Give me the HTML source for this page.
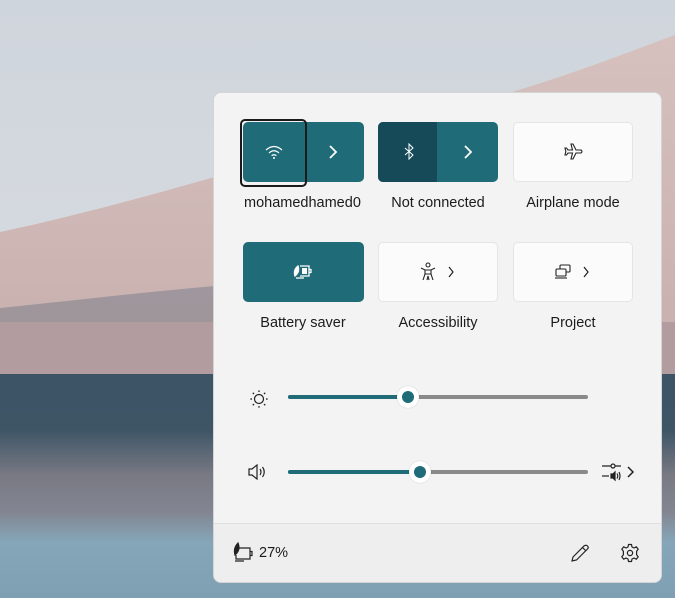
<!DOCTYPE html>
<html><head><style>
body{margin:0;width:675px;height:598px;overflow:hidden;position:relative;font-family:"Liberation Sans",sans-serif;}
.bg{position:absolute;left:0;top:0}
.panel{position:absolute;left:213px;top:92px;width:447px;height:489px;background:#f3f3f3;border:1px solid #d4d4d4;border-radius:8px;overflow:hidden}
.tile{position:absolute;height:60px;border-radius:5px;box-sizing:border-box}
.teal{background:#1f6b78}
.white{background:#fbfbfb;border:1px solid #e5e5e5}
.lbl{position:absolute;font-size:14.5px;color:#1b1b1b;text-align:center;width:130px}
.foot{position:absolute;left:0;top:430px;width:447px;height:60px;background:#eeeeee;border-top:1px solid #dedede}
svg{position:absolute}
</style></head><body>
<svg class="bg" width="675" height="598">
<defs>
<linearGradient id="sky" x1="0" y1="0" x2="0" y2="1"><stop offset="0" stop-color="#cfd5dc"/><stop offset="1" stop-color="#dde0e4"/></linearGradient>
<linearGradient id="dune" x1="0" y1="0" x2="0" y2="1"><stop offset="0" stop-color="#d6c1bf"/><stop offset="1" stop-color="#c6adab"/></linearGradient>
<linearGradient id="water" x1="0" y1="0" x2="0" y2="1"><stop offset="0" stop-color="#3c5466"/><stop offset="0.25" stop-color="#3e5566"/><stop offset="0.45" stop-color="#787983"/><stop offset="0.62" stop-color="#838692"/><stop offset="0.75" stop-color="#84a6b8"/><stop offset="1" stop-color="#7ea0b2"/></linearGradient>
</defs>
<rect width="675" height="598" fill="url(#sky)"/>
<path d="M0 232 C150 200 300 150 450 110 C560 80 620 55 675 35 L675 400 L0 400Z" fill="url(#dune)"/>
<path d="M0 308 C80 300 160 290 230 285 L230 330 L0 330Z" fill="#7c7f8c" opacity="0.55"/>
<path d="M0 322 L675 322 L675 380 L0 380Z" fill="#b29c9f"/>
<rect y="374" width="675" height="224" fill="url(#water)"/>
</svg>
<div class="panel">
 <div class="tile teal" style="left:29px;top:29px;width:121px"></div>
 <div style="position:absolute;left:92px;top:29px;width:1px;height:60px;background:#1a5e6a"></div>
 <div style="position:absolute;left:26px;top:26px;width:63px;height:64px;border:2px solid #1a1a1a;border-radius:5px"></div>
 <svg style="left:50px;top:51px" width="20" height="16" viewBox="0 0 20 16" fill="none" stroke="#fff" stroke-width="1.2"><path d="M2 6 Q10 -1 18 6"/><path d="M5 9 Q10 4.5 15 9"/><path d="M7.6 11.6 Q10 9.8 12.4 11.6"/><circle cx="10" cy="14" r="1" fill="#fff" stroke="none"/></svg>
 <svg style="left:114px;top:52px" width="10" height="14" fill="none" stroke="#fff" stroke-width="1.8"><path d="M2 1 L8 7 L2 13"/></svg>
 <div class="tile" style="left:164px;top:29px;width:120px;background:#1f6b78"></div>
 <div style="position:absolute;left:164px;top:29px;width:59px;height:60px;background:#164a58;border-radius:5px 0 0 5px"></div>
 <svg style="left:189px;top:50px" width="12" height="18" fill="none" stroke="#fff" stroke-width="1"><path d="M2 5 L10 12 L6 16 L6 1 L10 5 L2 12"/></svg>
 <svg style="left:249px;top:52px" width="10" height="14" fill="none" stroke="#fff" stroke-width="1.8"><path d="M2 1 L8 7 L2 13"/></svg>
 <div class="tile white" style="left:299px;top:29px;width:120px"></div>
 <svg style="left:349px;top:49px" width="22" height="20" viewBox="0 0 22 20" fill="none" stroke="#222" stroke-width="1.1"><path d="M8 2 L10 2 L13 8 L18 8 Q20 9.5 18 11 L13 11 L10 17 L8 17 L9.5 11 L5 11 L3.5 13 L2 13 L2.8 9.5 L2 6 L3.5 6 L5 8 L9.5 8 Z"/></svg>
 <div class="lbl" style="left:30px;top:102px;width:120px;overflow:hidden;white-space:nowrap;text-align:left">mohamedhamed0</div>
 <div class="lbl" style="left:159px;top:102px">Not connected</div>
 <div class="lbl" style="left:294px;top:102px">Airplane mode</div>
 <div class="tile teal" style="left:29px;top:149px;width:121px"></div>
 <svg style="left:78px;top:170px" width="22" height="16" viewBox="0 0 22 16" fill="none" stroke="#fff" stroke-width="1.3"><path d="M8 3 L17 3 L17 13 L8 13"/><rect x="10" y="5" width="5" height="6" fill="#fff" stroke="none"/><path d="M17 6.5 L19 6.5 L19 9.5 L17 9.5"/><path d="M6 3 Q1 7 3 13 Q8 9 6 3Z" fill="#fff"/><path d="M4 15 L12 15"/></svg>
 <div class="tile white" style="left:164px;top:149px;width:120px"></div>
 <svg style="left:205px;top:169px" width="18" height="20" viewBox="0 0 18 20" fill="none" stroke="#222" stroke-width="1.1"><circle cx="9" cy="3" r="2"/><path d="M2 6 L6 8 L12 8 L16 6 M6 8 L6 12 L4 18 M12 8 L12 12 L14 18 M6 12 L12 12 M8 18 L9 14 L10 18"/></svg>
 <svg style="left:233px;top:173px" width="8" height="12" fill="none" stroke="#222" stroke-width="1.2"><path d="M2 1 L6 6 L2 11"/></svg>
 <div class="tile white" style="left:299px;top:149px;width:120px"></div>
 <svg style="left:339px;top:170px" width="22" height="18" viewBox="0 0 22 18" fill="none" stroke="#222" stroke-width="1.1"><rect x="7" y="2" width="10" height="7" rx="1"/><rect x="3" y="6" width="10" height="7" rx="1" fill="#fbfbfb"/><path d="M2 15 L14 15"/></svg>
 <svg style="left:368px;top:173px" width="8" height="12" fill="none" stroke="#222" stroke-width="1.2"><path d="M2 1 L6 6 L2 11"/></svg>
 <div class="lbl" style="left:24px;top:222px">Battery saver</div>
 <div class="lbl" style="left:159px;top:222px">Accessibility</div>
 <div class="lbl" style="left:294px;top:222px">Project</div>
 <svg style="left:35px;top:296px" width="20" height="20" viewBox="0 0 20 20" fill="none" stroke="#222" stroke-width="1.2"><circle cx="10" cy="10" r="4.5"/><g stroke-width="1.5" stroke-linecap="round"><path d="M10 2v.3M10 17.7v.3M2 10h.3M17.7 10h.3M4.3 4.3l.2.2M15.5 15.5l.2.2M4.3 15.7l.2-.2M15.5 4.5l.2-.2"/></g></svg>
 <div style="position:absolute;left:74px;top:302px;width:300px;height:4px;border-radius:2px;background:#8a8a8a"></div>
 <div style="position:absolute;left:74px;top:302px;width:120px;height:4px;border-radius:2px;background:#1f6b78"></div>
 <div style="position:absolute;left:183px;top:293px;width:22px;height:22px;border-radius:50%;background:#fff;box-shadow:0 0 1px rgba(0,0,0,.3)"></div>
 <div style="position:absolute;left:188px;top:298px;width:12px;height:12px;border-radius:50%;background:#1f6b78"></div>
 <svg style="left:33px;top:370px" width="22" height="18" viewBox="0 0 22 18" fill="none" stroke="#222" stroke-width="1.2"><path d="M2 6 L5 6 L10 2 L10 16 L5 12 L2 12Z"/><path d="M13 6 Q15 9 13 12M15.5 4 Q19 9 15.5 14"/></svg>
 <div style="position:absolute;left:74px;top:377px;width:300px;height:4px;border-radius:2px;background:#8a8a8a"></div>
 <div style="position:absolute;left:74px;top:377px;width:132px;height:4px;border-radius:2px;background:#1f6b78"></div>
 <div style="position:absolute;left:195px;top:368px;width:22px;height:22px;border-radius:50%;background:#fff;box-shadow:0 0 1px rgba(0,0,0,.3)"></div>
 <div style="position:absolute;left:200px;top:373px;width:12px;height:12px;border-radius:50%;background:#1f6b78"></div>
 <svg style="left:387px;top:368px" width="36" height="22" viewBox="0 0 36 22" fill="none" stroke="#222" stroke-width="1.2"><path d="M1 5 L10 5 M14 5 L20 5"/><circle cx="12" cy="5" r="2"/><path d="M1 15 L8 15"/><path d="M10 13 L12 13 L14 11 L14 19 L12 17 L10 17Z" fill="#222"/><path d="M16 12.5 Q17.5 15 16 17.5M18 11 Q20 15 18 19"/><path d="M27 6 L32 11 L27 16" stroke-width="1.5"/></svg>
 <div class="foot">
  <svg style="left:18px;top:18px" width="24" height="20" viewBox="0 0 24 20" fill="none" stroke="#222" stroke-width="1.2"><path d="M7 6 L18 6 L18 17 L4 17 L4 13"/><path d="M18 9.5 L20 9.5 L20 13.5 L18 13.5"/><path d="M6 1 Q1 6 3 13 Q9 8 6 1Z" fill="#222"/><path d="M3 19 L12 19"/></svg>
  <div style="position:absolute;left:45px;top:21px;font-size:14.5px;color:#1b1b1b">27%</div>
  <svg style="left:356px;top:19px" width="20" height="20" viewBox="0 0 20 20" fill="none" stroke="#222" stroke-width="1.2"><path d="M2 18 L3 14 L14 3 Q16 1.5 17.5 3 Q19 4.5 17.5 6 L6.5 17 Z M12.5 4.5 L16 8"/></svg>
  <svg style="left:406px;top:19px" width="20" height="20" viewBox="0 0 20 20" fill="none" stroke="#222" stroke-width="1.2"><circle cx="10" cy="10" r="2.6"/><path d="M8.5 1.5 L11.5 1.5 L12 4 L14 5 L16.3 3.8 L18.2 6.2 L16.6 8.2 L16.6 11.8 L18.2 13.8 L16.3 16.2 L14 15 L12 16 L11.5 18.5 L8.5 18.5 L8 16 L6 15 L3.7 16.2 L1.8 13.8 L3.4 11.8 L3.4 8.2 L1.8 6.2 L3.7 3.8 L6 5 L8 4 Z" stroke-linejoin="round"/></svg>
 </div>
</div>
</body></html>
